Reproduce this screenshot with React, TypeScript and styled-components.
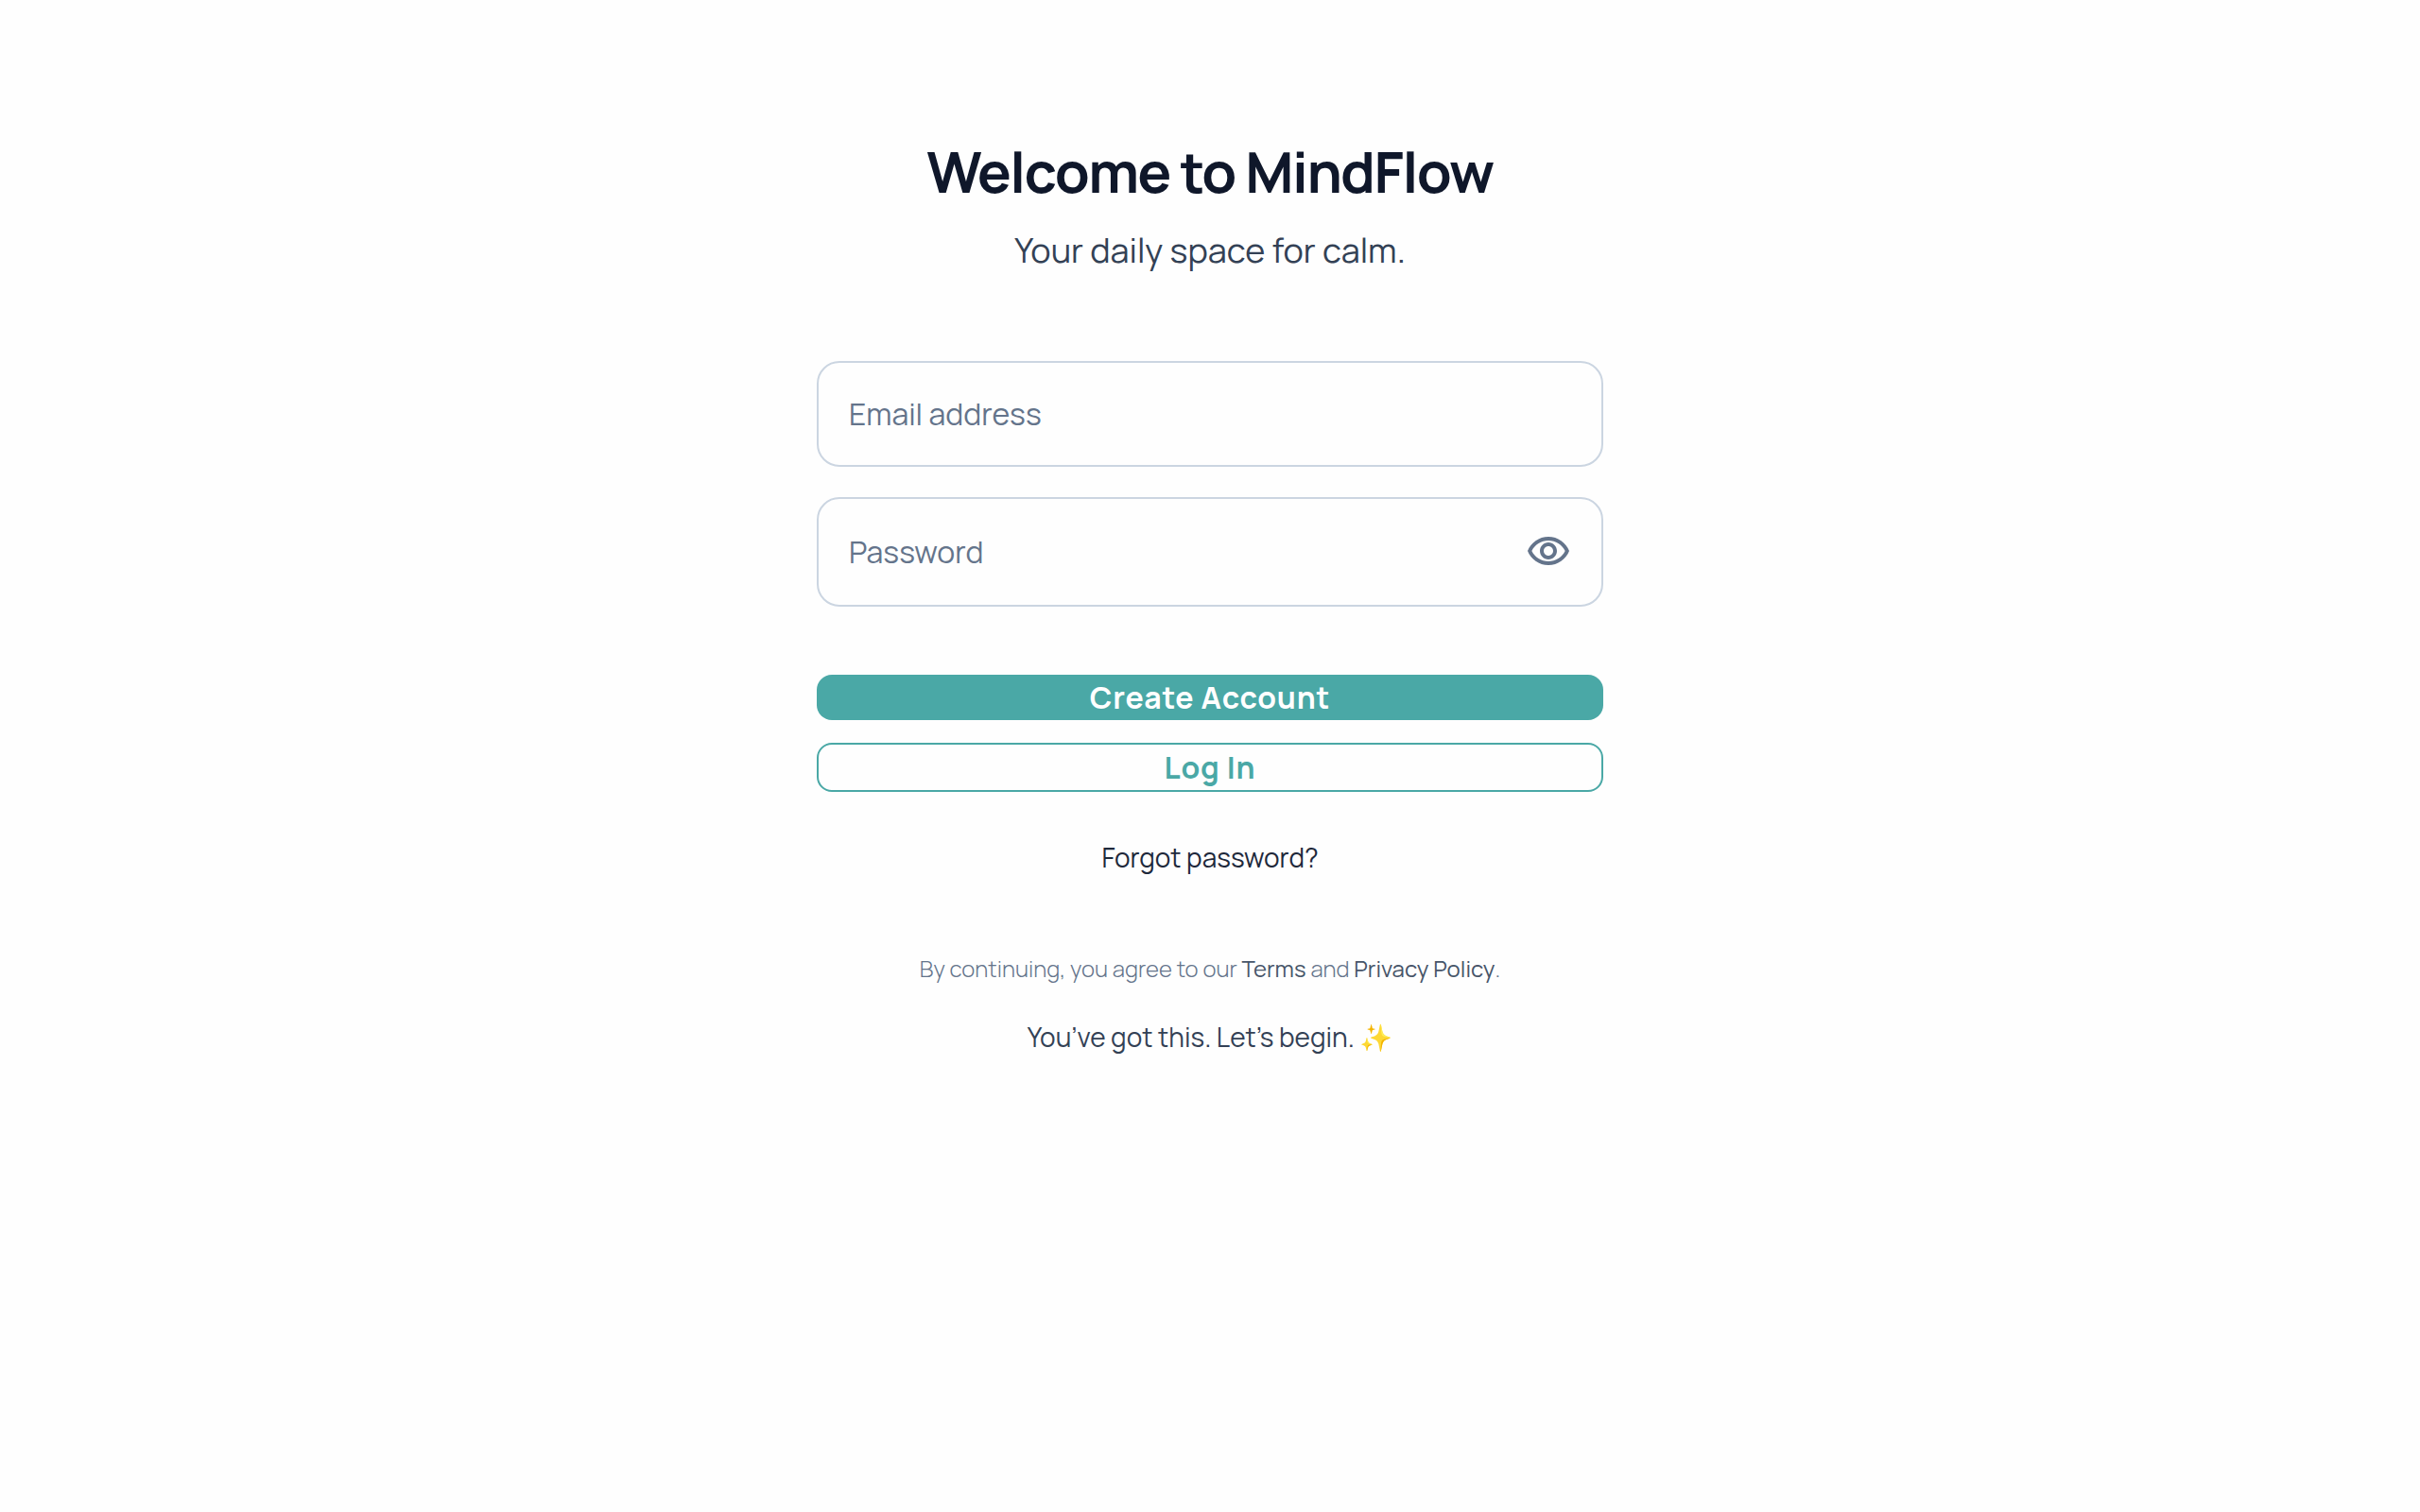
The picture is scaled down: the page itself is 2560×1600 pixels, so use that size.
import React, { useState } from "react";
import styled, { createGlobalStyle } from "styled-components";

const GlobalStyle = createGlobalStyle`
  *, *::before, *::after { box-sizing: border-box; }
  body {
    margin: 0;
    background: #fefefe;
    color: #0f172a;
    font-family: Manrope, Inter, "Noto Color Emoji", sans-serif;
  }
`;

const Page = styled.main`
  width: 100%;
  max-width: 896px;
  margin: 0 auto;
  padding: 144px 32px 64px;
  text-align: center;
`;

const Title = styled.h1`
  margin: 0;
  font-size: 60px;
  line-height: 75px;
  font-weight: 700;
  letter-spacing: -0.025em;
`;

const Subtitle = styled.p`
  margin: 16px 0 0;
  font-size: 36px;
  line-height: 60px;
  font-weight: 400;
  color: #334155;
`;

const Form = styled.form`
  display: flex;
  flex-direction: column;
  margin-top: 87px;
`;

const Fields = styled.div`
  display: flex;
  flex-direction: column;
  gap: 32px;
`;

const Field = styled.div<{ $height: number }>`
  display: flex;
  align-items: center;
  height: ${(p) => p.$height}px;
  padding: 0 32px;
  border: 2px solid #cbd5e1;
  border-radius: 24px;

  &:focus-within { border-color: #4aa8a6; }
`;

const TextInput = styled.input`
  flex: 1;
  min-width: 0;
  padding: 0;
  border: 0;
  outline: 0;
  background: transparent;
  color: #0f172a;
  font-family: inherit;
  font-size: 32px;
  line-height: 48px;
  font-weight: 400;

  &::placeholder { color: #64748b; opacity: 1; }
`;

const IconButton = styled.button`
  display: flex;
  padding: 0;
  border: 0;
  background: none;
  color: #64748b;
  cursor: pointer;
`;

const Actions = styled.div`
  display: flex;
  flex-direction: column;
  gap: 24px;
  margin-top: 72px;
`;

const Button = styled.button<{ $outline?: boolean }>`
  padding: 0;
  border: ${(p) => (p.$outline ? "2px solid #4aa8a6" : "0")};
  border-radius: 16px;
  background: ${(p) => (p.$outline ? "transparent" : "#4aa8a6")};
  color: ${(p) => (p.$outline ? "#4aa8a6" : "#ffffff")};
  font-family: inherit;
  font-size: 32px;
  line-height: 48px;
  font-weight: 700;
  letter-spacing: 0.025em;
  cursor: pointer;
`;

const ForgotLink = styled.a`
  display: inline-block;
  margin-top: 49px;
  font-size: 28px;
  line-height: 40px;
  font-weight: 400;
  color: #1e293b;
  text-decoration: none;
`;

const Legal = styled.p`
  margin: 78px 0 0;
  font-size: 24px;
  line-height: 40px;
  font-weight: 300;
  color: #64748b;
`;

const LegalLink = styled.a`
  color: #475569;
  font-weight: 400;
  text-decoration: none;
`;

const Encouragement = styled.p`
  margin: 32px 0 0;
  font-size: 28px;
  line-height: 40px;
  font-weight: 400;
  color: #334155;
`;

function EyeIcon() {
  return (
    <svg width="48" height="48" viewBox="0 0 24 24" fill="currentColor" aria-hidden="true">
      <path d="M12 6c3.79 0 7.17 2.13 8.82 5.5C19.17 14.87 15.79 17 12 17s-7.17-2.13-8.82-5.5C4.83 8.13 8.21 6 12 6m0-2C7 4 2.73 7.11 1 11.5 2.73 15.89 7 19 12 19s9.27-3.11 11-7.5C21.27 7.11 17 4 12 4m0 5c1.38 0 2.5 1.12 2.5 2.5S13.38 14 12 14s-2.5-1.12-2.5-2.5S10.62 9 12 9m0-2c-2.48 0-4.5 2.02-4.5 4.5S9.52 16 12 16s4.5-2.02 4.5-4.5S14.48 7 12 7" />
    </svg>
  );
}

export default function App() {
  const [visible, setVisible] = useState(false);

  return (
    <>
      <GlobalStyle />
      <Page>
        <Title>Welcome to MindFlow</Title>
        <Subtitle>Your daily space for calm.</Subtitle>
        <Form onSubmit={(e) => e.preventDefault()}>
          <Fields>
            <Field $height={112}>
              <TextInput
                id="email"
                type="email"
                aria-label="Email address"
                placeholder="Email address"
                autoComplete="email"
              />
            </Field>
            <Field $height={116}>
              <TextInput
                id="password"
                type={visible ? "text" : "password"}
                aria-label="Password"
                placeholder="Password"
              />
              <IconButton
                type="button"
                aria-label={visible ? "Hide password" : "Show password"}
                onClick={() => setVisible(!visible)}
              >
                <EyeIcon />
              </IconButton>
            </Field>
          </Fields>
          <Actions>
            <Button type="submit">Create Account</Button>
            <Button type="button" $outline>Log In</Button>
          </Actions>
        </Form>
        <ForgotLink href="#forgot">Forgot password?</ForgotLink>
        <Legal>
          By continuing, you agree to our <LegalLink href="#terms">Terms</LegalLink> and{" "}
          <LegalLink href="#privacy">Privacy Policy</LegalLink>.
        </Legal>
        <Encouragement>You’ve got this. Let’s begin. ✨</Encouragement>
      </Page>
    </>
  );
}
